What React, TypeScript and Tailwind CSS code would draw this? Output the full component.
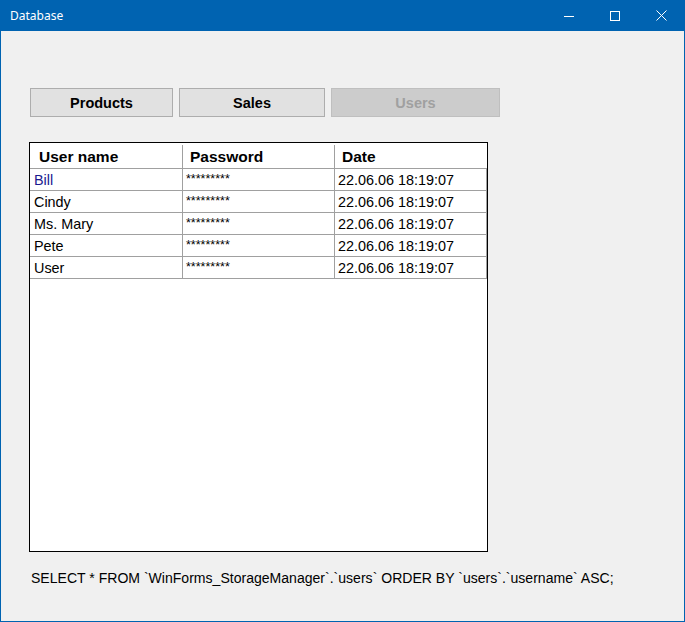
import React from "react"

const rows = [
  { name: "Bill", pass: "*********", date: "22.06.06 18:19:07", active: true },
  { name: "Cindy", pass: "*********", date: "22.06.06 18:19:07" },
  { name: "Ms. Mary", pass: "*********", date: "22.06.06 18:19:07" },
  { name: "Pete", pass: "*********", date: "22.06.06 18:19:07" },
  { name: "User", pass: "*********", date: "22.06.06 18:19:07" },
]

function TitleBar() {
  return (
    <div className="flex h-[31px] items-center justify-between bg-[#0063b1] text-white">
      <span className="pl-[9px] text-[12px] font-['Noto_Sans',sans-serif]">Database</span>
      <div className="flex h-full">
        <div className="flex h-full w-[46px] items-center justify-center">
          <svg width="10" height="10" viewBox="0 0 10 10">
            <line x1="0" y1="5.5" x2="10" y2="5.5" stroke="white" strokeWidth="1" />
          </svg>
        </div>
        <div className="flex h-full w-[46px] items-center justify-center">
          <svg width="10" height="10" viewBox="0 0 10 10">
            <rect x="0.5" y="0.5" width="9" height="9" fill="none" stroke="white" strokeWidth="1" />
          </svg>
        </div>
        <div className="flex h-full w-[46px] items-center justify-center">
          <svg width="11" height="11" viewBox="0 0 11 11">
            <path d="M0.5 0.5 L10.5 10.5 M10.5 0.5 L0.5 10.5" stroke="white" strokeWidth="1" />
          </svg>
        </div>
      </div>
    </div>
  )
}

export default function App() {
  return (
    <div className="flex h-[622px] w-[685px] flex-col border-x border-b border-[#0063b1] bg-[#f0f0f0] font-['Liberation_Sans',Arial,sans-serif]">
      <TitleBar />
      <div className="flex flex-1 flex-col pl-[28px] pt-[57px]">
        <div className="ml-[1px] flex gap-[6px]">
          <button className="h-[29px] w-[143px] border border-[#adadad] bg-[#e1e1e1] pt-[3px] text-[14.5px] font-bold text-black">
            Products
          </button>
          <button className="h-[29px] w-[146px] border border-[#adadad] bg-[#e1e1e1] pt-[3px] text-[14.5px] font-bold text-black">
            Sales
          </button>
          <button disabled className="h-[29px] w-[169px] border border-[#bfbfbf] bg-[#cccccc] pt-[3px] text-[14.5px] font-bold text-[#a0a0a0]">
            Users
          </button>
        </div>

        <div className="mt-[25px] flex h-[410px] w-[459px] flex-col border border-black bg-white">
          <div className="flex h-[26px] border-b border-[#a0a0a0] pt-[2px] text-[15.5px] font-bold text-black">
            <div className="flex w-[153px] items-center border-r border-[#a0a0a0] pl-[9px]">User name</div>
            <div className="flex w-[152px] items-center border-r border-[#a0a0a0] pl-[7px]">Password</div>
            <div className="flex w-[152px] items-center pl-[7px]">Date</div>
          </div>
          {rows.map((r) => (
            <div key={r.name} className="flex h-[22px] border-b border-[#a0a0a0] text-[14.4px]">
              <div className={`flex w-[153px] items-center border-r border-[#a0a0a0] pl-[4px] pt-[2px] ${r.active ? "text-[#1a1a90]" : "text-black"}`}>
                {r.name}
              </div>
              <div className="flex w-[152px] items-start border-r border-[#a0a0a0] pl-[3px] pt-[3px] text-[12.5px] leading-[14px] text-black">
                {r.pass}
              </div>
              <div className="flex w-[152px] items-center border-r border-[#a0a0a0] pl-[3px] pt-[2px] text-black">
                {r.date}
              </div>
            </div>
          ))}
        </div>

        <p className="mt-[18px] pl-[2px] text-[14.05px] leading-[16px] text-black">
          SELECT * FROM `WinForms_StorageManager`.`users` ORDER BY `users`.`username` ASC;
        </p>
      </div>
    </div>
  )
}
